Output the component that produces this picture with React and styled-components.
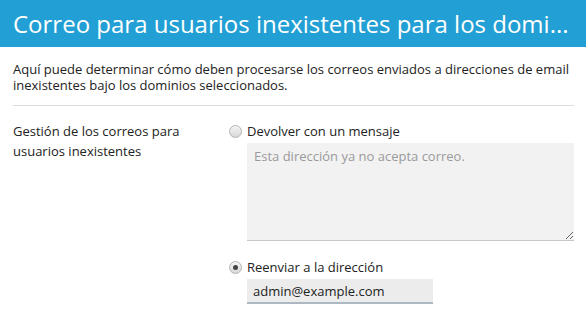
import React from "react";
import styled, { createGlobalStyle } from "styled-components";

const GlobalStyle = createGlobalStyle`
  body {
    margin: 0;
    background: #fff;
    font-family: "Open Sans", "DejaVu Sans", sans-serif;
    color: #222;
  }
`;

const Header = styled.div`
  background-color: #229fd4;
  height: 47px;
  padding: 0 13px;
  display: flex;
  align-items: center;
`;

const Title = styled.h1`
  margin: 0;
  font-size: 24px;
  font-weight: 400;
  color: #fff;
  white-space: nowrap;
`;

const Body = styled.div`
  padding: 14px 12px 0 13px;
`;

const Intro = styled.p`
  margin: 0;
  font-size: 13px;
  line-height: 16px;
`;

const Divider = styled.hr`
  border: none;
  border-top: 1px solid #dcdcdc;
  margin: 12px 0 15px;
`;

const Row = styled.div`
  display: grid;
  grid-template-columns: 216px 1fr;
`;

const Label = styled.div`
  font-size: 13px;
  line-height: 20px;
`;

const Options = styled.div`
  display: flex;
  flex-direction: column;
`;

const Option = styled.label`
  display: flex;
  align-items: center;
  gap: 5px;
  font-size: 13px;
  line-height: 20px;
  margin-top: ${(p) => p.$gap || 0}px;
`;

const Radio = styled.span`
  width: 11px;
  height: 11px;
  border-radius: 50%;
  border: 1px solid #b4b4b4;
  background: linear-gradient(#f4f4f4, #d8d8d8);
  display: flex;
  align-items: center;
  justify-content: center;

  &::after {
    content: "";
    width: 5px;
    height: 5px;
    border-radius: 50%;
    background: ${(p) => (p.$checked ? "#444" : "transparent")};
  }
`;

const Field = styled.div`
  margin-left: 18px;
  margin-top: 2px;
`;

const TextArea = styled.textarea`
  box-sizing: border-box;
  display: block;
  width: 327px;
  height: 98px;
  padding: 4px 7px;
  border: none;
  border-bottom: 1px solid #c8c8c8;
  background: #f2f2f2;
  font-family: "Open Sans", "DejaVu Sans", sans-serif;
  font-size: 13px;
  line-height: 18px;
  color: #222;
  outline: none;

  &::placeholder {
    color: #9a9a9a;
  }
`;

const Input = styled.input`
  box-sizing: border-box;
  display: block;
  width: 186px;
  height: 25px;
  padding: 0 6px;
  border: none;
  border-bottom: 2px solid #aeb8c2;
  background: #ececec;
  font-family: "Open Sans", "DejaVu Sans", sans-serif;
  font-size: 13px;
  color: #222;
  outline: none;
`;

function App() {
  return (
    <>
      <GlobalStyle />
      <Header>
        <Title>Correo para usuarios inexistentes para los domi...</Title>
      </Header>
      <Body>
        <Intro>
          Aquí puede determinar cómo deben procesarse los correos enviados a direcciones de email
          inexistentes bajo los dominios seleccionados.
        </Intro>
        <Divider />
        <Row>
          <Label>
            Gestión de los correos para
            <br />
            usuarios inexistentes
          </Label>
          <Options>
            <Option>
              <Radio />
              Devolver con un mensaje
            </Option>
            <Field>
              <TextArea placeholder="Esta dirección ya no acepta correo." />
            </Field>
            <Option $gap={16}>
              <Radio $checked />
              Reenviar a la dirección
            </Option>
            <Field>
              <Input defaultValue="admin@example.com" />
            </Field>
          </Options>
        </Row>
      </Body>
    </>
  );
}

export default App;
